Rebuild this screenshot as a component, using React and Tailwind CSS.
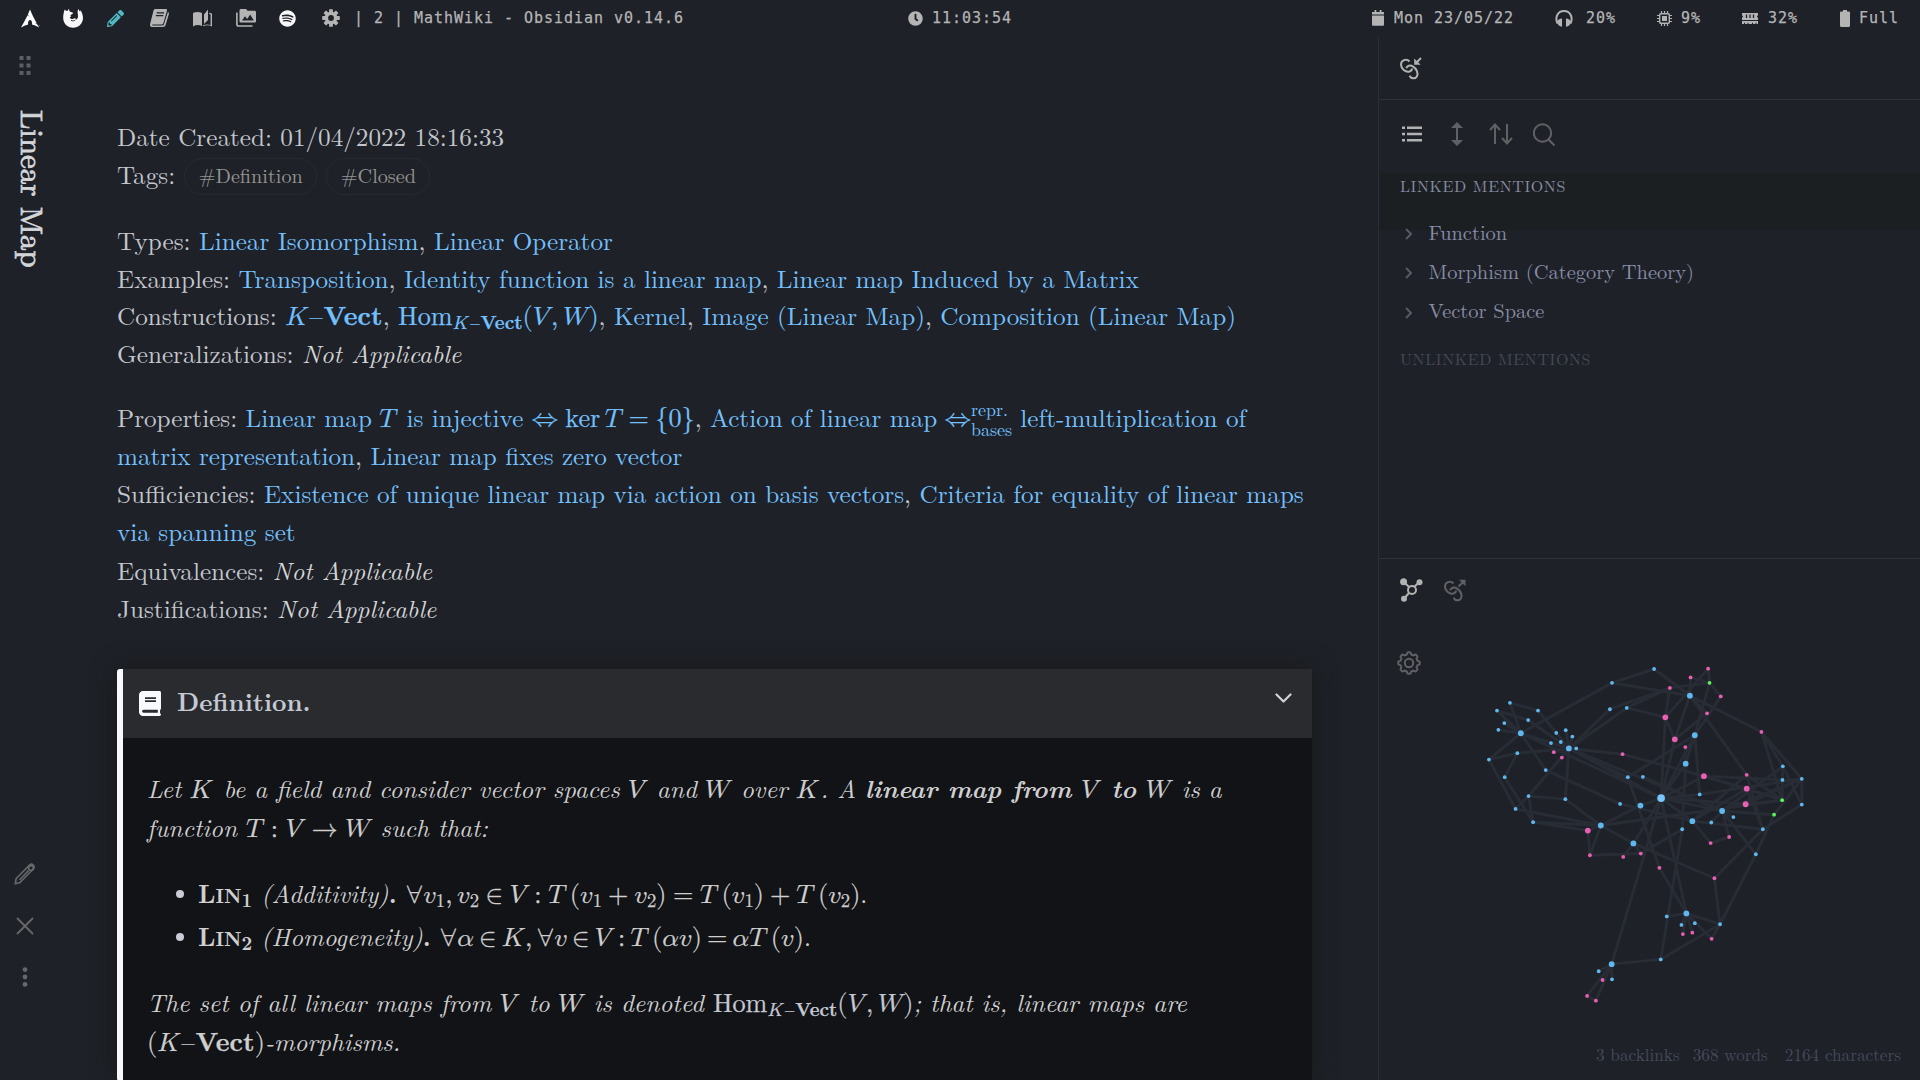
import React from "react";
import { FaPencilAlt, FaSpotify, FaClock } from "react-icons/fa";
import { SiArchlinux } from "react-icons/si";

/* ---------- math typesetting ---------- */

const M = ({ children, className = "" }) => (
  <span className={"text-[26.2px] leading-[0] [-webkit-text-stroke:0.25px] " + className}>{children}</span>
);
const ITALIC_GAP = { V: "mr-[0.12em]", T: "mr-[0.07em]", K: "mr-[0.04em]", W: "mr-[0.03em]" };
const V = ({ children }) => (
  <span className={"font-['Latin_Modern_Math','Liberation_Serif',serif] not-italic font-normal [text-transform:math-auto] " + (ITALIC_GAP[children] || "")}>{children}</span>
);
/* A single variable set inside running text. */
const X = ({ children }) => <M className="-ml-[1px] mr-[1.7px]"><V>{children}</V></M>;
const Op = ({ children, className = "" }) => (
  <span className={"font-['Latin_Modern_Math','Liberation_Serif',serif] not-italic font-normal " + className}>{children}</span>
);
const Rel = ({ children }) => <Op className="mx-[6.5px]">{children}</Op>;
const TightRel = ({ children }) => <Op className="mx-[5.1px]">{children}</Op>;
const WideRel = ({ children }) => <Op className="mx-[7.5px]">{children}</Op>;
const Bin = ({ children }) => <Op className="mx-[6px]">{children}</Op>;
const Thin = () => <span className="inline-block w-[4.5px]" />;
const Up = ({ children }) => <span className="not-italic font-normal">{children}</span>;
const Sub = ({ children }) => <span className="relative top-[4px] text-[18.6px] not-italic">{children}</span>;
const Paren = ({ children }) => (
  <><Op>(</Op>{children}<Op>)</Op></>
);
const KVect = () => (
  <>
    <V>K</V>
    <span className="mx-[1px] font-normal not-italic">–</span>
    <b className="not-italic">Vect</b>
  </>
);
const HomVW = () => (
  <M>
    <Up>Hom</Up>
    <Sub><KVect /></Sub>
    <Paren><V>V</V><Up>,</Up><Thin /><V>W</V></Paren>
  </M>
);

const A = ({ children }) => <a className="text-[#74c0fc]">{children}</a>;
const Line = ({ children, className = "" }) => <div className={"whitespace-nowrap " + className}>{children}</div>;
const NA = () => <em className="text-[#d4d4d4]">Not Applicable</em>;

/* ---------- top bar ---------- */

const FirefoxIcon = () => (
  <svg className="h-[20px] w-[20px]" viewBox="0 0 20 20">
    <path d="M1.600 1.600C2.300 2.600 3.300 3 4.300 3.100 5 2.200 5.600 1.400 6 .8c0 1.300.3 2.300 1 3 1.300.1 2.500.6 3 1.200-.3 1-1.400 1.400-2.300 1.900-.3.700-.1 1.200.4 1.700-.6.2-1 .5-1.300.9.5 1.200 1.700 1.700 3 1.400 1-.3 1.700-.7 2.600-.5.5.3.400.9 0 1.300 2-.5 2.900-2.400 2.600-4.300C14.700 5.300 14 3 15.600.8c.1 1.200.7 2 1.500 2.800.1-.7.3-1.100.6-1.400C19 4.800 20 7 20 10c0 5.500-4.500 9.800-10 9.800S.2 15.400.2 10C.2 6.800.8 4 1.600 1.600z" fill="#f8f8fa" />
    <path d="M8 12.400c1.500.8 3 .4 4.200-.2" stroke="#1e2128" strokeWidth="0.900" fill="none" />
  </svg>
);
const BookIcon = () => (
  <svg className="h-[18px] w-[19px]" viewBox="0 0 19 18" fill="#b4b4b4">
    <path d="M5.500 0h10.200c1 0 1.600.8 1.300 1.800L13.400 14c-.3 1-1.200 1.600-2.200 1.600H2.600c-.5 0-.7.8 0 .8h9.600c.9 0 1.500-.4 1.800-1.200L17.900 3c.9.4 1.200 1 1 1.900L15.600 16c-.4 1.200-1.400 2-2.700 2H2.400C.8 18-.3 16.600.1 15L3.500 1.500C3.700.6 4.500 0 5.500 0z" />
    <path d="M6.700 3.800h7.400M5.900 6.600h7.400" stroke="#1e2128" strokeWidth="1.200" />
  </svg>
);
const OpenBookIcon = () => (
  <svg className="h-[18px] w-[19px]" viewBox="0 0 19 18" fill="#b4b4b4">
    <path d="M0 4c3-1.500 6-1.500 9 0v13c-3-1.400-6-1.400-9 .5zM11 5.500 15 .5V11l-4 4zM16.300 3.800 19 4.600v12.900c-2.700-1.600-6-1.700-9-.2v-1.100c2.700-1 5.200-1 7.600-.3V5.500l-1.300-.4z" />
  </svg>
);
const ImagesIcon = () => (
  <svg className="h-[18px] w-[20px]" viewBox="0 0 20 18" fill="#b4b4b4">
    <path d="M5 0h5l1.600 1.800H18.500c.8 0 1.500.6 1.500 1.400v9c0 .8-.6 1.400-1.400 1.400H5c-.8 0-1.500-.6-1.500-1.400V1.500C3.500.6 4.200 0 5 0z" />
    <path d="M.9 3.500V15.200c0 1 .7 1.800 1.800 1.800H16.500" fill="none" stroke="#b4b4b4" strokeWidth="1.600" />
    <path d="M6 11.500 9 7.200l2.200 2.700 3-4.300 3.600 5.900z" fill="#1e2128" />
  </svg>
);
const CogIcon = () => (
  <svg className="h-[18px] w-[18px]" viewBox="-9 -9 18 18">
    {[0, 45, 90, 135].map((a) => (
      <rect key={a} x="-1.900" y="-8.800" width="3.800" height="17.600" rx="0.600" fill="#b4b4b4" transform={`rotate(${a})`} />
    ))}
    <circle r="6.300" fill="#b4b4b4" />
    <circle r="2.900" fill="#1e2128" />
  </svg>
);
const CalendarIcon = () => (
  <svg className="h-[16px] w-[12px]" viewBox="0 0 12 16" fill="#b4b4b4">
    <path d="M2.500 0h1.800v2h3.400V0h1.800v2H12v2.600H0V2h2.500zM0 5.500h12V14.500c0 .8-.5 1.300-1.300 1.300H1.300C.5 15.800 0 15.300 0 14.500z" />
  </svg>
);
const HeadphonesIcon = () => (
  <svg className="h-[17px] w-[18px]" viewBox="0 0 18 17" fill="none" stroke="#b4b4b4">
    <path d="M2.500 13.500C-.5 7 3 1 9 1s9.500 6 6.500 12.500" strokeWidth="2" />
    <path d="M7 8.500v8.300c-2.600-.2-4.600-2.300-5-5C2.800 9.800 4.600 8.600 7 8.500zM11 8.500v8.300c2.600-.2 4.600-2.300 5-5-.8-2-2.600-3.200-5-3.300z" fill="#b4b4b4" stroke="none" />
  </svg>
);
const CpuIcon = () => (
  <svg className="h-[15px] w-[15px]" viewBox="0 0 15 15" fill="none" stroke="#b4b4b4">
    <rect x="2.700" y="2.700" width="9.600" height="9.600" rx="1" strokeWidth="1.400" />
    <rect x="5" y="5" width="5" height="5" fill="#b4b4b4" stroke="none" />
    <path d="M4.500 0v2.500M7.500 0v2.500M10.500 0v2.500M4.500 12.500V15M7.500 12.500V15M10.500 12.500V15M0 4.500h2.500M0 7.500h2.500M0 10.500h2.500M12.500 4.500H15M12.500 7.500H15M12.500 10.500H15" strokeWidth="1.200" />
  </svg>
);
const RamIcon = () => (
  <svg className="h-[11px] w-[16px]" viewBox="0 0 16 11" fill="#b4b4b4">
    <path d="M0 0h16v2.500a1 1 0 0 0 0 2V7H0V4.500a1 1 0 0 0 0-2zM0 8h16v3h-1.500V9.700h-1V11h-2.500V9.700h-1V11H6.500V9.700h-1V11H3V9.700H2V11H0z" />
    <path d="M4.500 1.500v3.500M8 1.500v3.500M11.500 1.500v3.500" stroke="#1e2128" strokeWidth="1.300" />
  </svg>
);
const BatteryIcon = () => (
  <svg className="h-[17px] w-[10px]" viewBox="0 0 10 17" fill="#b4b4b4">
    <path d="M3 0h4v1.500h1.800c.7 0 1.200.5 1.200 1.200v13.100c0 .7-.5 1.200-1.200 1.200H1.200C.5 17 0 16.500 0 15.800V2.700c0-.7.5-1.200 1.200-1.200H3z" />
  </svg>
);

function TopBar() {
  return (
    <header className="flex h-[37px] items-center whitespace-pre pb-[1px] font-['DejaVu_Sans_Mono','Liberation_Mono',monospace] text-[15px] tracking-[0.97px] text-[#b4b4b4] [-webkit-text-stroke:0.25px]">
      <div className="flex w-[886px] items-center pl-[21px]">
        <span className="w-[42px] text-white"><SiArchlinux size={19} /></span>
        <span className="w-[44px]"><FirefoxIcon /></span>
        <span className="w-[43px] text-[#50b8c3]"><FaPencilAlt size={17} /></span>
        <span className="w-[43px]"><BookIcon /></span>
        <span className="w-[43px]"><OpenBookIcon /></span>
        <span className="w-[43px]"><ImagesIcon /></span>
        <span className="w-[43px] text-[#f8f8fa]"><FaSpotify size={17} /></span>
        <span className="w-[32px]"><CogIcon /></span>
        <span>| 2 | MathWiki - Obsidian v0.14.6</span>
      </div>
      <div className="flex w-[464px] items-center gap-[9px] pl-[22px]">
        <FaClock size={15} />
        <span>11:03:54</span>
      </div>
      <div className="flex items-center pl-[22px]">
        <span className="w-[22px]"><CalendarIcon /></span><span className="w-[161px]">Mon 23/05/22</span>
        <span className="w-[31px]"><HeadphonesIcon /></span><span className="w-[71px]">20%</span>
        <span className="w-[24px]"><CpuIcon /></span><span className="w-[61px]">9%</span>
        <span className="w-[26px]"><RamIcon /></span><span className="w-[72px]">32%</span>
        <span className="w-[19px]"><BatteryIcon /></span><span>Full</span>
      </div>
    </header>
  );
}

/* ---------- note ---------- */

function SideRail() {
  return (
    <aside className="flex w-[117px] flex-col">
      <svg className="ml-[19px] mt-[19px] h-[20px] w-[12px]" viewBox="0 0 12 20" fill="#5d5e62">
        {[0.5, 7.5].map((x) => [0, 7.5, 15].map((y) => <rect key={x + "-" + y} x={x} y={y} width="4" height="4" rx="0.5" />))}
      </svg>
      <div className="ml-[15px] mt-[34px] w-[38px] text-[30.9px] leading-[38px] text-[#d2d4d8] [-webkit-text-stroke:0.8px] [writing-mode:vertical-rl]">Linear Map</div>
      <div className="mb-[93px] ml-[14px] mt-auto flex w-[22px] flex-col items-center text-[#66676a]">
        <svg className="h-[22px] w-[22px]" viewBox="0 0 22 22" fill="none" stroke="currentColor" strokeWidth="1.700" strokeLinejoin="round">
          <path d="M1.200 20.800 2.200 15.500 15.500 2.200c1.200-1.200 2.800-1 3.800 0s1.200 2.600 0 3.800L6 19.500z" />
          <path d="M5.500 17 14.500 7.700" />
          <circle cx="17" cy="5" r="2.400" />
        </svg>
        <svg className="mt-[32px] h-[18px] w-[18px]" viewBox="0 0 18 18" fill="none" stroke="currentColor" strokeWidth="1.800" strokeLinecap="round">
          <path d="M1.500 1.500l15 15M16.500 1.500l-15 15" />
        </svg>
        <svg className="mt-[32px] h-[20px] w-[6px]" viewBox="0 0 6 20" fill="currentColor">
          <circle cx="3" cy="2.600" r="2.400" /><circle cx="3" cy="10" r="2.400" /><circle cx="3" cy="17.400" r="2.400" />
        </svg>
      </div>
    </aside>
  );
}

const Tag = ({ children }) => (
  <span className="inline-flex h-[37px] items-center rounded-full border border-[#272a31] px-[13.5px] pb-[2px] text-[20.2px] leading-none text-[#93938f]">{children}</span>
);

const AXIOMS = [
  ["1", "(Additivity)", (
    <M key="m">
      <Op>∀</Op><V>v</V><Sub>1</Sub><Up>,</Up><Thin /><V>v</V><Sub>2</Sub><Rel>∈</Rel><V>V</V><Rel>:</Rel><V>T</V><Thin /><Paren><V>v</V><Sub>1</Sub><Bin>+</Bin><V>v</V><Sub>2</Sub></Paren><Rel>=</Rel><V>T</V><Thin /><Paren><V>v</V><Sub>1</Sub></Paren><Bin>+</Bin><V>T</V><Thin /><Paren><V>v</V><Sub>2</Sub></Paren>
    </M>
  )],
  ["2", "(Homogeneity)", (
    <M key="m">
      <Op>∀</Op><V>α</V><TightRel>∈</TightRel><V>K</V><Up>,</Up><Thin /><Op>∀</Op><V>v</V><TightRel>∈</TightRel><V>V</V><TightRel>:</TightRel><V>T</V><Thin /><Paren><V>α</V><V>v</V></Paren><TightRel>=</TightRel><V>α</V><V>T</V><Thin /><Paren><V>v</V></Paren>
    </M>
  )],
];

function Callout() {
  return (
    <section className="mt-[42px] h-[412px] w-[1195px] shrink-0 rounded-l-[3px] border-l-[6px] border-[#f8f9fd] bg-[#121317] shadow-[0_0_24px_rgba(24,24,22,0.9)]">
      <div className="flex h-[69px] items-center bg-[#2a2b2e] pl-[16px] pr-[20px]">
        <svg className="h-[25px] w-[22px]" viewBox="0 0 22 25">
          <path d="M4 0h16.500c.9 0 1.500.6 1.500 1.500v16c0 .6-.3 1-.8 1.300-.3 1.200-.3 2.600 0 3.700.5.3.8.6.8 1.100 0 .8-.6 1.400-1.400 1.400H4c-2.300 0-4-1.700-4-4V4c0-2.300 1.700-4 4-4z" fill="#f8f9fd" />
          <path d="M6 7.200h11M6 10.200h11" stroke="#2a2b2e" strokeWidth="1.700" />
          <path d="M4.600 18.700h14.200v3H4.600c-2 0-2-3 0-3z" fill="#2a2b2e" />
        </svg>
        <span className="ml-[16px] pb-[6px] font-bold text-[#c3c8d3]">Definition.</span>
        <svg className="mb-[10px] ml-auto h-[10px] w-[17px]" viewBox="0 0 17 10" fill="none" stroke="#d0d3d8" strokeWidth="2.200" strokeLinecap="round" strokeLinejoin="round">
          <path d="M1.500 1.500l7 7 7-7" />
        </svg>
      </div>
      <div className="pl-[24px] pt-[30px] italic leading-[39px] text-[#cfcfcf]">
        <Line className="h-[39px]">Let <X>K</X> be a field and consider vector spaces <X>V</X> and <X>W</X> over <X>K</X>. A <b>linear map from <X>V</X> to <X>W</X></b> is a</Line>
        <Line className="h-[39px]">function <M className="mr-[1px]"><V>T</V><WideRel>:</WideRel><V>V</V><WideRel>→</WideRel><V>W</V></M> such that:</Line>
        <ul className="py-[25px] pl-[29px] leading-[43px]">
          {AXIOMS.map(([n, name, math]) => (
            <li key={n} className="flex h-[43px] whitespace-pre">
              <span className="mr-[14px] mt-[19px] h-[8px] w-[8px] rounded-full bg-[#c9ccd6]" />
              <span>
                <b className="not-italic">L<span className="text-[19.5px] leading-[0]">IN</span><span className="leading-[0]"><Sub>{n}</Sub></span></b>{" "}{name}<b className="not-italic">.</b>{" "}{math}<Up>.</Up>
              </span>
            </li>
          ))}
        </ul>
        <Line className="h-[39px]">The set of all linear maps from <X>V</X> to <X>W</X> is denoted <span className="text-[#c3c8d3]"><HomVW /></span>; that is, linear maps are</Line>
        <Line className="h-[39px]"><M><Paren><KVect /></Paren></M>-morphisms.</Line>
      </div>
    </section>
  );
}

const Line2 = ({ children }) => <Line className="h-[38.2px]">{children}</Line>;

function Note() {
  return (
    <main className="flex w-[1261px] flex-col pt-[80px] text-[25.18px] leading-[37.5px] text-[#c3c6cc]">
      <Line>Date Created: 01/04/2022 18:16:33</Line>
      <Line className="flex h-[38px] items-center">Tags:<span className="ml-[9px] mt-[5px] flex gap-[9px]"><Tag>#Definition</Tag><Tag>#Closed</Tag></span></Line>
      <div className="mt-[28.6px]">
        <Line>Types: <A>Linear Isomorphism</A>, <A>Linear Operator</A></Line>
        <Line>Examples: <A>Transposition</A>, <A>Identity function is a linear map</A>, <A>Linear map Induced by a Matrix</A></Line>
        <Line>Constructions: <A><M><KVect /></M></A>, <A><HomVW /></A>, <A>Kernel</A>, <A>Image (Linear Map)</A>, <A>Composition (Linear Map)</A></Line>
        <Line>Generalizations: <NA /></Line>
      </div>
      <div className="mt-[26.7px] leading-[38.2px]">
        <Line2>
          Properties: <A>Linear map <X>T</X> is injective <M><Op>⇔</Op></M> <M className="-ml-[1px]">ker<Thin /><V>T</V><Rel>=</Rel>{"{0}"}</M></A>, <A>Action of linear map <M className="-ml-[1px]"><Op>⇔</Op></M>
          <span className="relative -ml-[2px] inline-block h-[1px] w-[43px] text-[18px] leading-none"><span className="absolute bottom-[9px] left-[2px]">repr.</span><span className="absolute -bottom-[11px] left-[2px]">bases</span></span> left-multiplication of</A>
        </Line2>
        <Line2><A>matrix representation</A>, <A>Linear map fixes zero vector</A></Line2>
        <Line2>Sufficiencies: <A>Existence of unique linear map via action on basis vectors</A>, <A>Criteria for equality of linear maps</A></Line2>
        <Line2><A>via spanning set</A></Line2>
        <Line2>Equivalences: <NA /></Line2>
        <Line2>Justifications: <NA /></Line2>
      </div>
      <Callout />
    </main>
  );
}

/* ---------- link + graph panels ---------- */

const LinkIcon = ({ incoming, className }) => (
  <svg className={"h-[23px] w-[22px] " + className} viewBox="0 0 22 23" fill="none" stroke="currentColor" strokeWidth="2">
    <path d="M9.500 4.500C6.500 1.300 1 3 1 7.500c0 4.200 4.500 8 8.500 7 1.500-.5 2.500-1.500 2.500-3" />
    <path d="M6.300 11.200c.7-2.500 3.700-3.500 6.200-2 4.200 2.500 6 7 4.500 10-1.500 3-5.800 2.800-7.500-.5" />
    {incoming ? (
      <><path d="M21 1 16.500 5.500" /><path d="M14.200 1.500v6.300h6.500z" fill="currentColor" stroke="none" /></>
    ) : (
      <><path d="M14.500 7.500 19 3" /><path d="M15 .8h6.500v6.500z" fill="currentColor" stroke="none" /></>
    )}
  </svg>
);

const W = 2.851;
const H = 2.958;
const SMALL = {
  blue: [[810,352],[690,393],[399,452],[362,475],[479,475],[451,503],[383,512],[366,532],[684,471],[732,467],[531,541],[558,533],[577,552],[544,568],[516,571],[588,587],[420,601],[339,620],[384,672],[501,651],[452,728],[557,737],[415,766],[465,805],[735,672],[778,671],[713,751],[940,723],[1177,640],[1176,680],[1231,677],[1231,753],[1120,826],[1036,790],[973,806],[890,826],[1100,900],[846,1084],[888,1109],[926,1104],[998,1107],[829,1211],[652,1246],[690,1270]],
  pink: [[964,351],[914,377],[855,408],[1000,433],[961,483],[899,583],[1116,538],[1074,665],[720,604],[524,598],[547,614],[627,903],[722,908],[772,898],[825,940],[971,867],[1024,849],[982,971],[892,1136],[919,1132],[974,1150],[663,1272],[619,1319],[644,1333]],
  green: [[968,393],[1175,740],[1152,783]],
};
const MEDIUM = {
  blue: [[912,431],[430,542],[567,587],[926,548],[900,632],[771,756],[658,815],[751,868],[919,802],[1004,772],[902,1075],[689,1225]],
  pink: [[842,495],[869,560],[952,669],[1074,706],[1071,752],[621,830]],
  green: [],
};
const FILL = { blue: "#5fb8ee", pink: "#e85fb4", green: "#5ff55f" };
const EDGES = [
  [810,352,690,393],[810,352,912,431],[690,393,912,431],[690,393,430,542],[399,452,479,475],[399,452,430,542],[362,475,451,503],[362,475,430,542],[479,475,567,587],[451,503,567,587],[383,512,430,542],[366,532,430,542],
  [430,542,567,587],[430,542,830,734],[430,542,339,620],[430,542,501,651],[420,601,567,587],[420,601,339,620],[420,601,384,672],[384,672,465,805],[339,620,415,766],[415,766,452,728],[452,728,567,587],[452,728,557,737],[452,728,465,805],[557,737,567,587],[557,737,658,815],[415,766,658,815],[465,805,658,815],[465,805,621,830],
  [567,587,684,471],[567,587,732,467],[567,587,558,533],[567,587,544,568],[567,587,516,571],[567,587,577,552],[567,587,588,587],[567,587,524,598],[684,471,855,408],[732,467,855,408],[732,467,842,495],[855,408,968,393],[855,408,842,495],[914,377,968,393],[914,377,912,431],[964,351,842,495],[964,351,968,393],[1000,433,968,393],[1000,433,926,548],[968,393,926,548],
  [912,431,869,560],[912,431,961,483],[912,431,1116,538],[912,431,1074,665],[961,483,869,560],[842,495,830,734],[842,495,869,560],[869,560,830,734],[899,583,900,632],[926,548,900,632],[926,548,940,723],[926,548,735,672],[926,548,830,734],[900,632,830,734],[900,632,890,826],
  [567,587,720,604],[720,604,952,669],[567,587,830,734],[567,587,735,672],[567,587,1004,772],[501,651,713,751],[713,751,919,802],[771,756,830,734],[771,756,658,815],[735,672,825,940],[778,671,1004,772],[830,734,940,723],[830,734,1004,772],[830,734,1071,752],[830,734,919,802],[830,734,751,868],[830,734,902,1075],[830,734,689,1225],[830,734,952,669],
  [952,669,1176,680],[952,669,1175,740],[952,669,1074,706],[1074,706,1175,740],[1074,706,919,802],[1074,706,1120,826],[1071,752,1231,677],[1071,752,1175,740],[1074,665,919,802],[1074,665,1175,740],[1074,665,1120,826],[1004,772,1177,640],[1004,772,1231,677],[1004,772,1152,783],[1004,772,973,806],[1004,772,1036,790],[1004,772,1024,849],[1004,772,1100,900],[940,723,1231,677],
  [919,802,1120,826],[919,802,971,867],[971,867,1024,849],[658,815,1175,740],[658,815,627,903],[658,815,751,868],[621,830,658,815],[621,830,627,903],[627,903,772,898],[751,868,722,908],[751,868,772,898],[751,868,982,971],[890,826,772,898],[890,826,829,1211],[825,940,902,1075],[982,971,1120,826],[982,971,998,1107],[998,1107,1100,900],[1100,900,1152,783],[1120,826,1231,753],[1231,753,1231,677],
  [1116,538,1177,640],[1116,538,1231,677],[1116,538,1175,740],[1177,640,1231,753],[1177,640,1176,680],[1176,680,1175,740],[1152,783,1231,677],[902,1075,846,1084],[902,1075,888,1109],[902,1075,998,1107],[902,1075,892,1136],[902,1075,919,1132],[902,1075,974,1150],[998,1107,974,1150],[998,1107,829,1211],[829,1211,689,1225],[689,1225,652,1246],[689,1225,690,1270],[689,1225,619,1319],[689,1225,644,1333],[619,1319,644,1333],
];

const Dots = ({ groups, r }) =>
  Object.entries(groups).map(([c, pts]) => pts.map(([x, y]) => <circle key={c + x + "-" + y} cx={x / W} cy={y / H} r={r} fill={FILL[c]} />));

/* Eight-lobed outline for the graph settings button. */
const GEAR = Array.from({ length: 97 }, (_, i) => {
  const a = (i / 96) * Math.PI * 2;
  const r = 9.7 + 1.3 * Math.max(-0.8, Math.min(0.8, 1.5 * Math.cos(8 * a)));
  return `${i ? "L" : "M"}${(r * Math.cos(a)).toFixed(2)} ${(r * Math.sin(a)).toFixed(2)}`;
}).join("") + "Z";

function RightPanel() {
  return (
    <aside className="flex w-[542px] flex-col border-l border-[#2b2e37]">
      <div className="flex h-[63px] items-center border-b border-[#2f323b] pl-[21px] text-[#b2b2b2]"><LinkIcon incoming /></div>
      <div className="h-[73px] pl-[23px] pt-[22px]">
        <div className="flex items-center text-[#606164]">
          <svg className="h-[16px] w-[20px]" viewBox="0 0 20 16" fill="none" stroke="#b2b2b2" strokeWidth="2.600"><path d="M0 1.800h3M5 1.800h15M0 8h3M5 8h15M0 14.200h3M5 14.200h15" /></svg>
          <svg className="ml-[29px] h-[24px] w-[12px]" viewBox="0 0 12 24"><path d="M6 4v16" stroke="currentColor" strokeWidth="2" /><path d="M6 0l6 6H0zM6 24l6-6H0z" fill="currentColor" /></svg>
          <svg className="ml-[26px] h-[22px] w-[24px]" viewBox="0 0 24 22" fill="none" stroke="currentColor" strokeWidth="2"><path d="M6 21V2M1 7l5-5.500L11 7M18 1v19M13 15l5 5.500 5-5.500" /></svg>
          <svg className="ml-[20px] h-[23px] w-[22px]" viewBox="0 0 22 23" fill="none" stroke="currentColor" strokeWidth="2"><circle cx="9.500" cy="10" r="8.700" /><path d="M15.500 16.500l6 6" /></svg>
        </div>
      </div>
      <div className="h-[57px] bg-[#1c1f22] pl-[21px] text-[16px] leading-[26px] tracking-[0.6px] text-[#858ba3]">LINKED MENTIONS</div>
      <div className="-mt-[18px] h-[133px] text-[20.45px] leading-[39.2px] text-[#858ba3]">
        {["Function", "Morphism (Category Theory)", "Vector Space"].map((t) => (
          <div key={t} className="flex items-center pl-[26px]">
            <svg className="mr-[16.5px] mt-[5px] h-[12px] w-[7px]" viewBox="0 0 7 12" fill="none" stroke="#555a69" strokeWidth="2"><path d="M1 1l5 5-5 5" /></svg>
            {t}
          </div>
        ))}
      </div>
      <div className="h-[214px] border-b border-[#2f323b] pl-[21px] text-[16px] leading-[27px] tracking-[0.6px] text-[#434857]">UNLINKED MENTIONS</div>
      <div className="relative h-[521px]">
        <svg className="absolute -left-[9px] -top-[9px] h-[530px] w-[550px]" viewBox="0 0 550 530">
          <g stroke="#282c34" strokeWidth="2.900">
            {EDGES.map(([a, b, c, d], i) => <line key={i} x1={a / W} y1={b / H} x2={c / W} y2={d / H} />)}
          </g>
          <Dots groups={SMALL} r={1.9} />
          <Dots groups={MEDIUM} r={2.9} />
          <circle cx={830 / W} cy={734 / H} r="3.800" fill="#78c6ff" />
        </svg>
        <div className="flex items-start gap-[21px] pl-[21px] pt-[19px]">
          <svg className="h-[24px] w-[23px] text-[#b2b2b2]" viewBox="0 0 23 24" fill="none" stroke="currentColor" strokeWidth="2">
            <path d="M4 4l5 5M19 4.500l-5 4.500M4 20.500l5-5.500" />
            <circle cx="12" cy="12" r="4" />
            <g fill="currentColor" stroke="none"><circle cx="3.600" cy="3.800" r="3.500" /><circle cx="19.500" cy="4.300" r="3" /><circle cx="4" cy="20.700" r="3" /></g>
          </svg>
          <LinkIcon className="mt-[1px] text-[#606164]" />
        </div>
        <svg className="ml-[18px] mt-[49px] h-[24px] w-[24px]" viewBox="-12 -12 24 24" fill="none" stroke="#606164" strokeWidth="2"><path d={GEAR} strokeLinejoin="round" /><circle r="4.200" /></svg>
        <div className="absolute bottom-[13px] right-[19px] flex text-[17.2px] leading-[26px] text-[#454b5c]">
          <span className="mr-[13px]">3 backlinks</span><span className="mr-[17px]">368 words</span><span>2164 characters</span>
        </div>
      </div>
    </aside>
  );
}

export default function App() {
  return (
    <div className="h-[1080px] w-[1920px] overflow-hidden bg-[#1e2128] font-['Latin_Modern_Roman','Liberation_Serif',serif]">
      <TopBar />
      <div className="flex h-[1043px]">
        <SideRail />
        <Note />
        <RightPanel />
      </div>
    </div>
  );
}
